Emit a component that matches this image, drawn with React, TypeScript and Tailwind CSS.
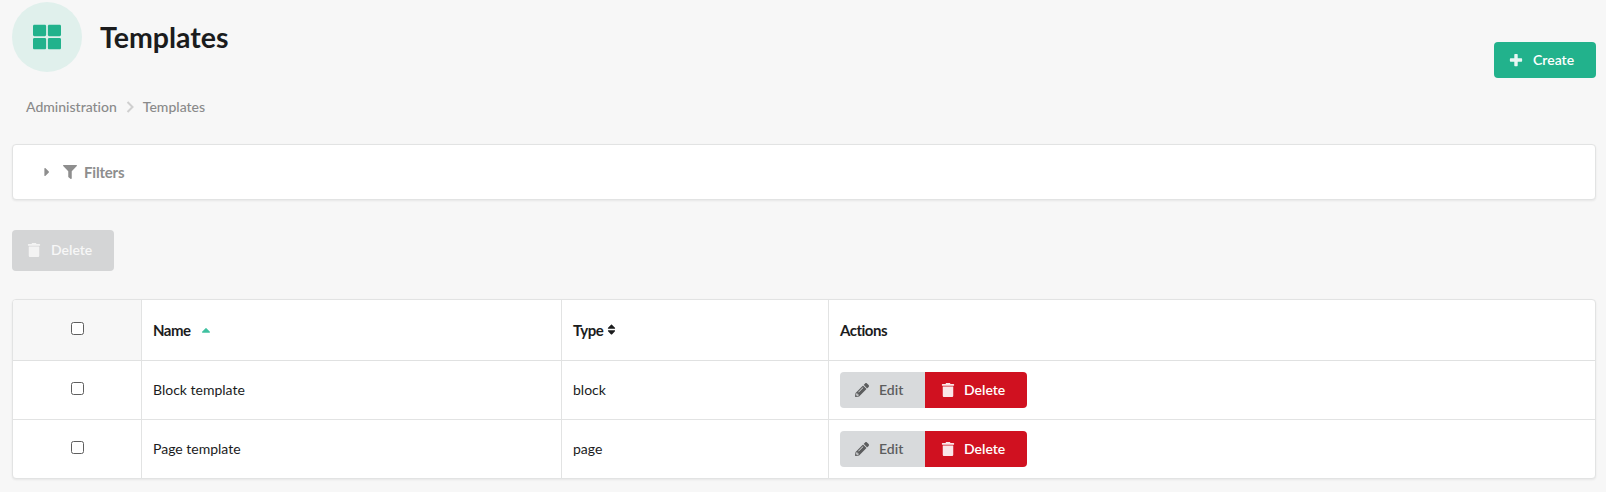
import React from 'react';
import { FaCaretRight, FaCaretUp, FaFilter, FaPencilAlt, FaSort, FaThLarge } from 'react-icons/fa';

const templates = [
  { name: 'Block template', type: 'block' },
  { name: 'Page template', type: 'page' },
];

function PlusIcon() {
  return (
    <svg viewBox="0 0 448 512" className="h-[14px] w-[14px] opacity-90" fill="currentColor">
      <path d="M448 294.2v-76.4c0-13.3-10.7-24-24-24H286.2V56c0-13.3-10.7-24-24-24h-76.4c-13.3 0-24 10.7-24 24v137.8H24c-13.3 0-24 10.7-24 24v76.4c0 13.3 10.7 24 24 24h137.8V456c0 13.3 10.7 24 24 24h76.4c13.3 0 24-10.7 24-24V318.2H424c13.3 0 24-10.7 24-24z" />
    </svg>
  );
}

function TrashIcon() {
  return (
    <svg viewBox="0 0 448 512" className="h-[14px] w-[14px] opacity-90" fill="currentColor">
      <path d="M0 84V56c0-13.3 10.7-24 24-24h112l9.4-18.7c4-8.2 12.3-13.3 21.4-13.3h114.3c9.1 0 17.4 5.1 21.5 13.3L312 32h112c13.3 0 24 10.7 24 24v28c0 6.6-5.4 12-12 12H12C5.4 96 0 90.6 0 84zm416 56v324c0 26.5-21.5 48-48 48H80c-26.5 0-48-21.5-48-48V140c0-6.6 5.4-12 12-12h360c6.6 0 12 5.4 12 12z" />
    </svg>
  );
}

function Checkbox({ label }: { label: string }) {
  return (
    <input
      type="checkbox"
      aria-label={label}
      className="block size-[13px] appearance-none rounded-[2.5px] border border-[#5f5f5f] bg-white"
    />
  );
}

function RowActions() {
  return (
    <div className="flex h-9 text-[14px] leading-[14px] font-semibold">
      <button className="flex w-[85px] items-center rounded-l-[4px] bg-[#d8dadc] pl-[15px] text-[#5c5d5e]">
        <FaPencilAlt className="size-[14px]" />
        <span className="ml-[10px]">Edit</span>
      </button>
      <button className="flex w-[102px] items-center rounded-r-[4px] bg-[#d01120] pl-[16px] text-white">
        <TrashIcon />
        <span className="ml-[9px]">Delete</span>
      </button>
    </div>
  );
}

export default function App() {
  return (
    <main className="flex h-[492px] flex-col bg-[#f7f7f7] px-3 pr-[10px] pt-[2px] font-['Lato',sans-serif] text-[14px] leading-[18px] text-[#1b1c1d] [font-variant-ligatures:none]">
      <header className="flex h-[76px] items-start justify-between">
        <div className="flex items-center">
          <div className="flex size-[70px] items-center justify-center rounded-full bg-[#e0f0ec] text-[#22b28c]">
            <FaThLarge className="size-7" />
          </div>
          <h1 className="ml-[18px] text-[28.5px] leading-9 font-bold">Templates</h1>
        </div>
        <button className="flex h-9 w-[102px] items-center self-end rounded-[4px] bg-[#22b28c] pl-[15px] font-semibold text-white">
          <PlusIcon />
          <span className="ml-[10px]">Create</span>
        </button>
      </header>

      <nav className="mt-5 flex h-[18px] items-center pl-[14px] font-medium text-[#8a8a8a]">
        <span>Administration</span>
        <svg viewBox="0 0 8 12" className="mr-[9px] ml-[9px] h-3 w-2" fill="none" stroke="#cfcfcf" strokeWidth="2">
          <path d="M1.5 1 6.5 6l-5 5" />
        </svg>
        <span>Templates</span>
      </nav>

      <section className="mt-7 flex h-14 items-center rounded-[4px] border border-[#e2e3e3] bg-white pb-px pl-[27px] font-bold text-[#8e8e8e] shadow-[0_1px_2px_rgba(34,36,38,0.08)]">
        <FaCaretRight className="size-[14px]" />
        <FaFilter className="ml-[9px] size-[14px]" />
        <span className="ml-[7px] text-[15px] tracking-[-0.2px]">Filters</span>
      </section>

      <button className="mt-[30px] flex h-[41px] w-[102px] shrink-0 items-center rounded-[4px] bg-[#d4d5d6] pb-[2px] pl-[15px] font-semibold text-[#f7f7f7]">
        <TrashIcon />
        <span className="ml-[10px]">Delete</span>
      </button>

      <div className="mt-7 overflow-hidden rounded-[4px] border border-[#e2e3e3] bg-white shadow-[0_1px_2px_rgba(34,36,38,0.08)]">
        <div className="grid h-[61px] grid-cols-[129px_420px_267px_1fr] border-b border-[#e0e1e1] text-[15px] font-bold tracking-[-0.5px]">
          <div className="flex items-center justify-center border-r border-[#e2e3e3] bg-[#f7f7f7] pb-[3px]">
            <Checkbox label="Select all" />
          </div>
          <div className="flex items-center border-r border-[#e2e3e3] pb-px pl-[11px]">
            Name
            <FaCaretUp className="ml-[8px] size-[14px] text-[#3fc1a0]" />
          </div>
          <div className="flex items-center border-r border-[#e2e3e3] pb-px pl-[11px]">
            Type
            <FaSort className="ml-[2px] size-[13px]" />
          </div>
          <div className="flex items-center pb-px pl-[11px]">Actions</div>
        </div>
        {templates.map((template) => (
          <div
            key={template.name}
            className="grid h-[59px] grid-cols-[129px_420px_267px_1fr] border-b border-[#e2e3e3] last:h-[58px] last:border-b-0"
          >
            <div className="flex items-center justify-center border-r border-[#e2e3e3] pb-[3px]">
              <Checkbox label={template.name} />
            </div>
            <div className="flex items-center border-r border-[#e2e3e3] pl-[11px]">{template.name}</div>
            <div className="flex items-center border-r border-[#e2e3e3] pl-[11px]">{template.type}</div>
            <div className="flex items-center pl-[11px]">
              <RowActions />
            </div>
          </div>
        ))}
      </div>
    </main>
  );
}
